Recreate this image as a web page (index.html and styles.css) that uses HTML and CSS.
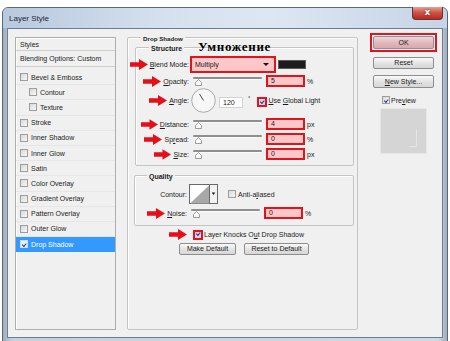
FILE: index.html
```html
<!doctype html>
<html lang="en">
<head>
  <meta charset="UTF-8" />
  <title>Layer Style</title>
  <link rel="stylesheet" href="styles.css">
</head>
<body>
  <div class="win">
    <div class="titlebar">
      <span class="title">Layer Style</span>
      <span class="close">x</span>
    </div>

    <div class="client">
      <!-- styles list -->
      <div class="styles">
        <div class="head">Styles</div>
        <div class="opts">Blending Options: Custom</div>
        <ul class="fx">
          <li><i class="cb"></i>Bevel &amp; Emboss</li>
          <li class="sub"><i class="cb"></i>Contour</li>
          <li class="sub"><i class="cb"></i>Texture</li>
          <li><i class="cb"></i>Stroke</li>
          <li><i class="cb"></i>Inner Shadow</li>
          <li><i class="cb"></i>Inner Glow</li>
          <li><i class="cb"></i>Satin</li>
          <li><i class="cb"></i>Color Overlay</li>
          <li><i class="cb"></i>Gradient Overlay</li>
          <li><i class="cb"></i>Pattern Overlay</li>
          <li><i class="cb"></i>Outer Glow</li>
          <li class="on"><i class="cb ck"></i>Drop Shadow</li>
        </ul>
      </div>

      <!-- drop shadow settings -->
      <div class="panel">
        <div class="lg">Drop Shadow</div>
        <div class="note">Умножение</div>

        <div class="grp structure">
          <div class="lg">Structure</div>

          <div class="row r-blend">
            <div class="lbl">
              <svg class="arr" width="18" height="11" viewBox="0 0 18 11"><path d="M0 3.2H9V0L18 5.5L9 11V7.8H0Z"/></svg>
              <span><u>B</u>lend Mode:</span>
            </div>
            <div class="sel">Multiply<span class="tri"></span></div>
            <div class="swatch"></div>
          </div>

          <div class="row r-opacity">
            <div class="lbl">
              <svg class="arr" width="18" height="11" viewBox="0 0 18 11"><path d="M0 3.2H9V0L18 5.5L9 11V7.8H0Z"/></svg>
              <span><u>O</u>pacity:</span>
            </div>
            <svg class="sl" width="69" height="12"><path d="M1 3H68" stroke="#8e8e8e" stroke-width="2" stroke-linecap="round"/><path d="M1 4.6H68" stroke="#fff" stroke-width="0.8"/><path d="M2.5 10.5V7.5L5.5 4.5L8.5 7.5V10.5Z" fill="#fbfbfb" stroke="#858585" stroke-width="0.8"/></svg>
            <div class="num">5</div>
            <span class="unit">%</span>
          </div>

          <div class="row r-angle">
            <div class="lbl">
              <svg class="arr" width="18" height="11" viewBox="0 0 18 11"><path d="M0 3.2H9V0L18 5.5L9 11V7.8H0Z"/></svg>
              <span><u>A</u>ngle:</span>
            </div>
            <svg class="dial" width="25" height="25" viewBox="0 0 25 25"><circle cx="12.5" cy="12.5" r="11.8" fill="#f7f7f7" stroke="#a2a2a2" stroke-width="0.9"/><path d="M12.5 12.5L8.5 6" stroke="#333" stroke-width="0.9"/></svg>
            <div class="field">120</div>
            <span class="deg">°</span>
            <i class="cb ck red"></i>
            <span class="cbl"><u>U</u>se <u>G</u>lobal Light</span>
          </div>

          <div class="row r-distance">
            <div class="lbl">
              <svg class="arr" width="17" height="11" viewBox="0 0 18 11"><path d="M0 3.2H9V0L18 5.5L9 11V7.8H0Z"/></svg>
              <span><u>D</u>istance:</span>
            </div>
            <svg class="sl" width="69" height="12"><path d="M1 3H68" stroke="#8e8e8e" stroke-width="2" stroke-linecap="round"/><path d="M1 4.6H68" stroke="#fff" stroke-width="0.8"/><path d="M2.5 10.5V7.5L5.5 4.5L8.5 7.5V10.5Z" fill="#fbfbfb" stroke="#858585" stroke-width="0.8"/></svg>
            <div class="num">4</div>
            <span class="unit">px</span>
          </div>

          <div class="row r-spread">
            <div class="lbl">
              <svg class="arr" width="18" height="11" viewBox="0 0 18 11"><path d="M0 3.2H9V0L18 5.5L9 11V7.8H0Z"/></svg>
              <span>Sp<u>r</u>ead:</span>
            </div>
            <svg class="sl" width="69" height="12"><path d="M1 3H68" stroke="#8e8e8e" stroke-width="2" stroke-linecap="round"/><path d="M1 4.6H68" stroke="#fff" stroke-width="0.8"/><path d="M2.5 10.5V7.5L5.5 4.5L8.5 7.5V10.5Z" fill="#fbfbfb" stroke="#858585" stroke-width="0.8"/></svg>
            <div class="num">0</div>
            <span class="unit">%</span>
          </div>

          <div class="row r-size">
            <div class="lbl">
              <svg class="arr" width="17" height="11" viewBox="0 0 18 11"><path d="M0 3.2H9V0L18 5.5L9 11V7.8H0Z"/></svg>
              <span><u>S</u>ize:</span>
            </div>
            <svg class="sl" width="69" height="12"><path d="M1 3H68" stroke="#8e8e8e" stroke-width="2" stroke-linecap="round"/><path d="M1 4.6H68" stroke="#fff" stroke-width="0.8"/><path d="M2.5 10.5V7.5L5.5 4.5L8.5 7.5V10.5Z" fill="#fbfbfb" stroke="#858585" stroke-width="0.8"/></svg>
            <div class="num">0</div>
            <span class="unit">px</span>
          </div>
        </div>

        <div class="grp quality">
          <div class="lg">Quality</div>

          <div class="row r-contour">
            <div class="lbl"><span>Contour:</span></div>
            <svg class="contour" width="29" height="20" viewBox="0 0 29 20"><rect x="0.5" y="0.5" width="20" height="19" fill="#fff" stroke="#6a6a6a"/><path d="M1 19.5L20.5 1V19.5Z" fill="#a8a8a8"/><rect x="20.5" y="0.5" width="8" height="19" fill="#f2f2f2" stroke="#6a6a6a"/><path d="M22.8 8.5H26.2L24.5 11Z" fill="#111"/></svg>
            <i class="cb"></i>
            <span class="cbl">Anti-a<u>l</u>iased</span>
          </div>

          <div class="row r-noise">
            <div class="lbl">
              <svg class="arr" width="18" height="11" viewBox="0 0 18 11"><path d="M0 3.2H9V0L18 5.5L9 11V7.8H0Z"/></svg>
              <span><u>N</u>oise:</span>
            </div>
            <svg class="sl" width="69" height="12"><path d="M1 3H68" stroke="#8e8e8e" stroke-width="2" stroke-linecap="round"/><path d="M1 4.6H68" stroke="#fff" stroke-width="0.8"/><path d="M2.5 10.5V7.5L5.5 4.5L8.5 7.5V10.5Z" fill="#fbfbfb" stroke="#858585" stroke-width="0.8"/></svg>
            <div class="num">0</div>
            <span class="unit">%</span>
          </div>
        </div>

        <div class="row knock">
          <svg class="arr" width="18" height="11" viewBox="0 0 18 11"><path d="M0 3.2H9V0L18 5.5L9 11V7.8H0Z"/></svg>
          <i class="cb ck red"></i>
          <span class="cbl">Layer Knocks O<u>u</u>t Drop Shadow</span>
        </div>

        <div class="defaults">
          <div class="btn make">Make Default</div>
          <div class="btn reset-def">Reset to Default</div>
        </div>
      </div>

      <!-- dialog buttons -->
      <div class="side">
        <div class="okwrap"><div class="btn ok">OK</div></div>
        <div class="btn s-reset">Reset</div>
        <div class="btn s-new"><u>N</u>ew Style...</div>
        <div class="prev"><i class="cb ck"></i><span>Pre<u>v</u>iew</span></div>
        <div class="thumb"><span class="t1"></span></div>
      </div>
    </div>
  </div>
</body>
</html>
```

FILE: styles.css
```css
*{ box-sizing:border-box; }
body{
  margin:0; background:#fff; overflow:hidden;
  font-family:"Liberation Sans", Arial, sans-serif; font-size:7px; color:#1b1b1b;
}
u{ text-decoration-thickness:1px; text-underline-offset:1px; }

/* window frame */
.win{
  margin:7px 0 0 2px;
  width:446px; height:340px;
  border:1px solid #5d6877;
  border-radius:6px 6px 0 0;
  background:linear-gradient(90deg,#9eacbe,#c4d0de 2%,#ccd8e6 98%,#9eacbe);
}
.titlebar{
  height:20px;
  display:flex; align-items:center;
  padding-left:6px;
  border-radius:5px 5px 0 0;
  background:linear-gradient(90deg,#b7c9de,#d4e0ed 35%,#dde7f2 60%,#c5d4e6);
}
.title{ font-size:8px; color:#1f2733; }
.close{
  align-self:flex-start;
  margin:-1px 4px 0 auto;
  width:31px; height:13px;
  border:1px solid #70302c; border-top:0;
  border-radius:0 0 4px 4px;
  background:linear-gradient(#e4a297,#cf5547 45%,#b52a1e);
  color:#fff; text-align:center;
  font:bold 9px/11px "DejaVu Sans", sans-serif;
  text-shadow:0 0 2px #5a1410;
}
.client{
  margin:0 4px;
  height:310px;
  border:1px solid #6f7c8e;
  background:#f0f0f0;
  display:flex; align-items:flex-start;
  padding:4px 0 0 7px;
}

/* checkboxes */
.cb{
  display:block; flex:none;
  width:8px; height:8px;
  border:1px solid #9d9d9d;
  background:linear-gradient(135deg,#d8d8d8,#f8f8f8);
}
.cb.ck::after{
  content:""; display:block;
  width:3px; height:1.5px;
  margin:1.5px 0 0 1.2px;
  border-left:1.3px solid #2b3c8c; border-bottom:1.3px solid #2b3c8c;
  transform:rotate(-48deg);
}
.cb.red{
  width:10px; height:10px;
  border:2px solid #e2141b;
  background:#cfd4ef;
}
.cb.red::after{ margin:0.8px 0 0 0.6px; }

/* left list */
.styles{
  margin-top:4px;
  width:101px; height:293px;
  border:1px solid #aeaeae;
  box-shadow:inset 1px 1px 0 #fff;
}
.head, .opts{
  display:flex; align-items:center;
  padding-left:4px;
  border-bottom:1px solid #cdcdcd;
}
.head{ height:13px; }
.opts{ height:16px; }
.fx{ list-style:none; margin:0; padding:3px 0 0; }
.fx li{
  height:15.2px;
  display:flex; align-items:center; gap:3px;
  padding-left:4px;
  border-bottom:1px solid #e6e6e6;
}
.fx li.sub{ padding-left:13px; }
.fx li.on{ background:#3399ff; color:#fff; border-bottom-color:#3399ff; }
.fx li.on .cb{ border-color:#c9defa; background:#e9f0fb; }

/* middle panel */
.panel{
  position:relative;
  margin:4px 0 0 11px;
  width:231px; height:293px;
  border:1px solid #c4c4c4;
  border-radius:2px;
  box-shadow:inset 1px 1px 0 #fff;
}
.lg{
  width:fit-content;
  height:9px; line-height:9px;
  margin:-4px 0 0 13px;
  padding:0 2px;
  background:#f0f0f0;
  font-weight:bold;
}
.panel > .lg{ font-weight:bold; font-size:6.2px; }
.note{
  position:absolute; left:70px; top:2px;
  font:bold 13px/13px "Liberation Serif", "Times New Roman", serif;
  letter-spacing:0.7px;
  color:#000;
}
.grp{
  margin:4px 0 0 7px;
  width:219px;
  border:1px solid #c4c4c4;
  border-radius:2px;
  box-shadow:inset 1px 1px 0 #fff;
}
.structure{ padding-bottom:5px; }
.quality{ margin-top:9px; margin-left:6px; width:220px; padding-bottom:6px; }
.quality > .lg{ margin-left:12px; }

.row{ display:flex; align-items:center; }
.lbl{
  flex:none;
  width:53px;
  display:flex; justify-content:flex-end; align-items:center; gap:2px;
  white-space:nowrap;
}
.lbl > *{ flex:none; }
.quality .lbl{ width:52px; }
.arr{ flex:none; fill:#e3101a; }

.r-blend{ margin-top:3px; height:17px; }
.r-opacity{ margin-top:2px; height:12px; }
.r-angle{ margin-top:1px; height:25px; }
.r-distance{ margin-top:5px; height:12px; }
.r-spread, .r-size{ margin-top:3px; height:12px; }
.r-contour{ margin-top:3px; height:20px; }
.r-noise{ margin-top:3px; height:12px; }

.sel{
  flex:none;
  margin-left:1px;
  width:86px; height:17px;
  border:2px solid #e2141b;
  background:#fbc7c9;
  display:flex; align-items:center;
  padding-left:3px;
}
.tri{
  margin-left:auto; margin-right:5px;
  border-left:3px solid transparent; border-right:3px solid transparent;
  border-top:3.5px solid #111;
}
.swatch{
  flex:none;
  margin-left:2px;
  width:28px; height:9px;
  background:#1d1d1d;
  border:1px solid #5a5a5a;
}
.sl{ flex:none; margin-left:4px; }
.num{
  flex:none;
  margin-left:4px;
  width:39px; height:12px;
  border:2px solid #e2141b;
  background:#fbc7c9;
  padding-left:3px;
  line-height:8px;
}
.unit{ margin-left:2px; }

.dial{ flex:none; margin-left:2px; }
.field{
  flex:none;
  margin:3px 0 0 3px;
  width:24px; height:11px;
  border:1px solid #d2d2d2;
  background:#fff;
  padding-left:3px;
  line-height:9px;
}
.deg{ align-self:flex-start; margin:7px 0 0 5px; font-size:6px; }
.r-angle .cb.red{ margin:3px 0 0 7px; }
.cbl{ margin-left:1px; white-space:nowrap; }

.r-contour .contour{ flex:none; margin-left:2px; }
.r-contour .cb{ margin-left:10px; }
.r-contour .cbl{ margin-left:2px; }

.knock{ margin-top:3px; height:11px; padding-left:41px; }
.knock .cb.red{ margin-left:6px; }

.defaults{
  display:flex; gap:8px;
  margin-top:3px; padding-left:51px;
}

/* buttons */
.btn{
  flex:none;
  height:12px;
  border:1px solid #8d8d8d;
  border-radius:2px;
  background:linear-gradient(#fafafa,#e4e4e4 50%,#d6d6d6);
  text-align:center; line-height:10px;
  white-space:nowrap;
}
.make{ width:57px; }
.reset-def{ width:65px; }

.side{ margin-left:12px; display:flex; flex-direction:column; align-items:flex-start; }
.okwrap{ border:2px solid #e2141b; padding:1px; }
.ok{
  width:61px; height:13px; line-height:11px;
  border-color:#8293a6;
  background:linear-gradient(#f1d6d8,#e3b9bc 50%,#d9a9ad);
}
.s-reset{ margin:5px 0 0 3px; width:61px; }
.s-new{ margin:6px 0 0 3px; width:61px; height:13px; line-height:11px; }
.prev{
  margin:7px 0 0 12px;
  display:flex; align-items:center; gap:1px;
  height:10px;
}
.thumb{
  position:relative;
  margin:3px 0 0 10px;
  width:47px; height:46px;
  border:1px solid #e6e6e6;
  background:#d5d5d5;
}
.t1{
  position:absolute; left:28px; top:20px;
  width:8px; height:18px;
  border-right:1px solid #e4e4e4;
  border-bottom:1px solid #e4e4e4;
}
```
